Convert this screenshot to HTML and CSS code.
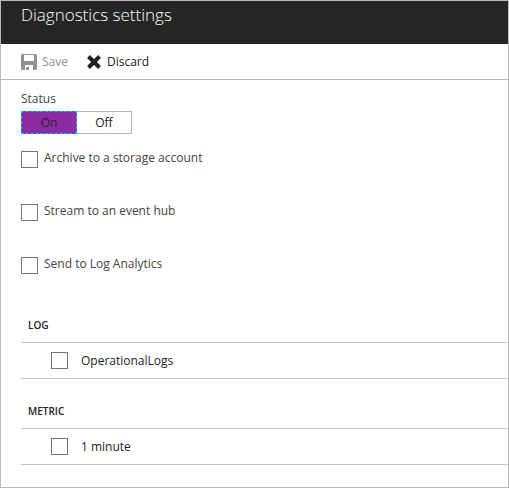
FILE: index.html
```html
<!DOCTYPE html>
<html lang="en">
<head>
<meta charset="utf-8">
<title>Diagnostics settings</title>
<link rel="stylesheet" href="styles.css">
</head>
<body>
<main class="blade">
  <header class="blade-header"><h1>Diagnostics settings</h1></header>
  <div class="toolbar">
    <button type="button" class="command" disabled>
      <svg width="16" height="16" viewBox="0 0 16 16" aria-hidden="true"><path fill="currentColor" fill-rule="evenodd" d="M1 0H15L16 1V15L15 16H12V11H4V16H1L0 15V1ZM3 1V7H13V1ZM5 13H8V16H5Z"/></svg>
      Save
    </button>
    <button type="button" class="command">
      <svg width="16" height="16" viewBox="0 0 16 16" aria-hidden="true"><path fill="none" stroke="currentColor" stroke-width="4" d="M2.5 2.5L13.5 13.5M13.5 2.5L2.5 13.5"/></svg>
      Discard
    </button>
  </div>
  <form class="settings">
    <fieldset class="status">
      <legend>Status</legend>
      <div class="switch">
        <label class="choice"><input type="radio" name="status" checked><span>On</span></label>
        <label class="choice"><input type="radio" name="status"><span>Off</span></label>
      </div>
    </fieldset>
    <div class="targets">
      <label class="target"><input type="checkbox"><span>Archive to a storage account</span></label>
      <label class="target"><input type="checkbox"><span>Stream to an event hub</span></label>
      <label class="target"><input type="checkbox"><span>Send to Log Analytics</span></label>
    </div>
    <section class="group">
      <h2>LOG</h2>
      <label class="row"><input type="checkbox"><span>OperationalLogs</span></label>
    </section>
    <section class="group">
      <h2>METRIC</h2>
      <label class="row"><input type="checkbox"><span>1 minute</span></label>
    </section>
  </form>
</main>
</body>
</html>
```
FILE: styles.css
```css
* {
  box-sizing: border-box;
}

body {
  margin: 0;
  font: 12px/16px "Open Sans", "Noto Sans", sans-serif;
  color: #222;
  background: #fff;
}

.blade {
  min-height: 100vh;
  border: 1px solid #bababa;
}

.blade-header {
  height: 43px;
  padding: 2px 20px;
  background: #252525;
  color: #fff;
}

h1 {
  margin: 0;
  font-size: 17px;
  font-weight: 300;
  line-height: 24px;
}

.toolbar {
  display: flex;
  gap: 18px;
  height: 36px;
  padding: 0 20px;
  border-bottom: 1px solid #b5b5b5;
}

.command {
  display: flex;
  align-items: center;
  gap: 5px;
  padding: 0;
  border: 0;
  background: none;
  font: inherit;
  color: #222;
}

.command:disabled {
  color: #939393;
}

.settings {
  padding: 11px 0 0 20px;
}

.status {
  margin: 0;
  padding: 0;
  border: 0;
  color: #444;
}

legend {
  padding: 0;
  margin-bottom: 4px;
}

.switch {
  display: flex;
}

.choice {
  position: relative;
  width: 56px;
}

.choice + .choice {
  width: 55px;
}

.choice input {
  position: absolute;
  inset: 0;
  margin: 0;
  opacity: 0;
}

.choice span {
  display: block;
  height: 23px;
  border: 1px solid #b5b5b5;
  border-left: 0;
  line-height: 21px;
  text-align: center;
  color: #222;
}

.choice input:checked + span {
  border: 1px dashed #00bcf2;
  background: #8a2da5;
}

input[type="checkbox"] {
  appearance: none;
  flex: none;
  width: 17px;
  height: 17px;
  margin: 0;
  border: 1px solid #767676;
  background: #fff;
}

.targets {
  display: grid;
  gap: 36px;
  margin: 17px 0 43px;
  color: #444;
}

.target {
  display: flex;
  gap: 6px;
  height: 17px;
}

.target span {
  line-height: 14px;
}

.group + .group {
  margin-top: 24px;
}

h2 {
  margin: 0;
  padding: 0 7px 9px;
  font-size: 10px;
  font-weight: 600;
  line-height: 16px;
}

.row {
  display: flex;
  align-items: center;
  gap: 13px;
  height: 37px;
  padding-left: 30px;
  border: 1px solid #c6c6c6;
  border-width: 1px 0;
}
```
